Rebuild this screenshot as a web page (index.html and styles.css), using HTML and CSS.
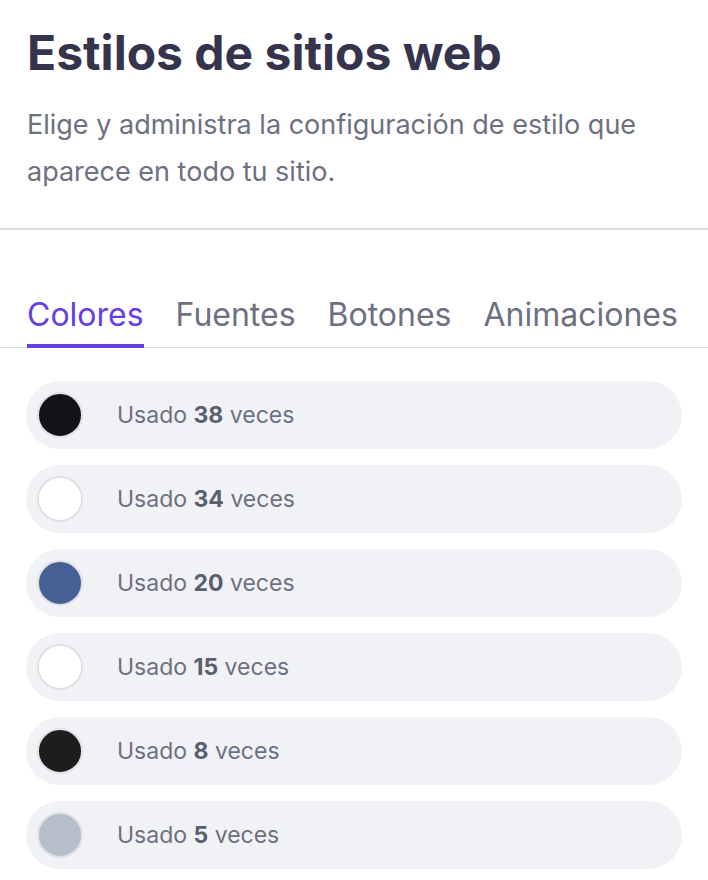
FILE: index.html
```html
<!DOCTYPE html>
<html lang="es">
  <head>
    <meta charset="UTF-8" />
    <meta name="viewport" content="width=device-width, initial-scale=1.0" />
    <title>Estilos de sitios web</title>
    <link rel="stylesheet" href="styles.css">
  </head>
  <body>
    <div class="header">
      <h1>Estilos de sitios web</h1>
      <p class="intro">
        Elige y administra la configuración de estilo que aparece en todo tu sitio.
      </p>
    </div>

    <div class="tabs">
      <div class="tab active">Colores</div>
      <div class="tab">Fuentes</div>
      <div class="tab">Botones</div>
      <div class="tab">Animaciones</div>
    </div>

    <ul class="color-list">
      <li class="color-row">
        <span class="swatch swatch-black"></span>
        <span class="usage">Usado <b>38</b> veces</span>
      </li>
      <li class="color-row">
        <span class="swatch swatch-white"></span>
        <span class="usage">Usado <b>34</b> veces</span>
      </li>
      <li class="color-row">
        <span class="swatch swatch-blue"></span>
        <span class="usage">Usado <b>20</b> veces</span>
      </li>
      <li class="color-row">
        <span class="swatch swatch-white"></span>
        <span class="usage">Usado <b>15</b> veces</span>
      </li>
      <li class="color-row">
        <span class="swatch swatch-dark"></span>
        <span class="usage">Usado <b>8</b> veces</span>
      </li>
      <li class="color-row">
        <span class="swatch swatch-grey"></span>
        <span class="usage">Usado <b>5</b> veces</span>
      </li>
    </ul>
  </body>
</html>
```

FILE: styles.css
```css
body {
  margin: 0;
  font-family: Inter, "Noto Sans", sans-serif;
  background-color: #ffffff;
  color: #36344d;
}

.header {
  padding: 24px 40px 33px 27px;
  border-bottom: 2px solid #dcdfe0;
}

h1 {
  margin: 0;
  font-size: 48px;
  font-weight: 700;
  line-height: 58px;
  color: #36344d;
}

.intro {
  margin: 19px 0 0;
  font-size: 27px;
  line-height: 47px;
  color: #6d7081;
}

.tabs {
  display: flex;
  gap: 32px;
  margin-top: 65px;
  padding: 0 27px;
  border-bottom: 1px solid #dcdfe0;
}

.tab {
  font-size: 32px;
  line-height: 40px;
  padding-bottom: 9px;
  color: #6d7081;
  border-bottom: 4px solid transparent;
  margin-bottom: -1px;
  white-space: nowrap;
}

.tab.active {
  color: #673de6;
  border-bottom-color: #673de6;
}

.color-list {
  list-style: none;
  margin: 33px 26px 0;
  padding: 0;
  display: flex;
  flex-direction: column;
  gap: 16px;
}

.color-row {
  display: flex;
  align-items: center;
  height: 68px;
  padding: 0 11px;
  background-color: #f1f2f6;
  border-radius: 34px;
}

.swatch {
  width: 42px;
  height: 42px;
  border-radius: 50%;
  border: 2px solid #dfe1e3;
  flex-shrink: 0;
}

.swatch-black { background-color: #121316; }
.swatch-white { background-color: #ffffff; }
.swatch-blue { background-color: #465f94; }
.swatch-dark { background-color: #1d1d1d; }
.swatch-grey { background-color: #b6bec9; }

.usage {
  margin-left: 34px;
  font-size: 23px;
  color: #6d7081;
}

.usage b {
  font-weight: 700;
  color: #5b5e6e;
}
```
